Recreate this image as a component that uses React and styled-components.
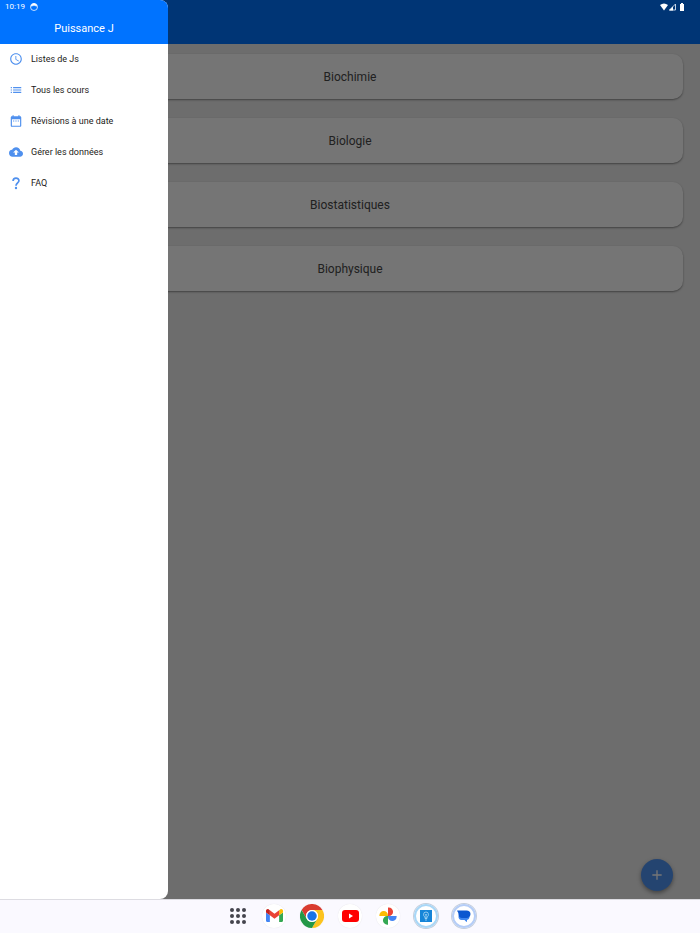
import React from "react";
import styled, { createGlobalStyle } from "styled-components";
import {
  MdAccessTime,
  MdList,
  MdDateRange,
  MdBackup,
  MdAdd,
} from "react-icons/md";

const GlobalStyle = createGlobalStyle`
  * { box-sizing: border-box; }
  body { margin: 0; font-family: Roboto, sans-serif; background: #faf9ff; }
  button { font: inherit; border: 0; padding: 0; background: none; cursor: pointer; }
`;

const Device = styled.div`
  min-height: 100vh;
  display: flex;
  flex-direction: column;
`;

const Screen = styled.div`
  position: relative;
  flex: 1;
  display: flex;
  flex-direction: column;
  background: #ededed;
`;

const AppBar = styled.header`
  height: 44px;
  background: #0073ff;
`;

const Courses = styled.main`
  display: flex;
  flex-direction: column;
  gap: 19px;
  padding: 10px 17px;
`;

const Course = styled.button`
  height: 45px;
  border-radius: 10px;
  background: #ffffff;
  box-shadow: 0 1px 2px rgba(0, 0, 0, 0.4);
  color: #484848;
  font-size: 12px;
  line-height: 16px;
`;

const AddButton = styled.button`
  position: absolute;
  right: 27px;
  bottom: 8px;
  width: 32px;
  height: 32px;
  display: grid;
  place-items: center;
  border-radius: 50%;
  background: #5094f5;
  color: #ffffff;
  box-shadow: 0 2px 4px rgba(0, 0, 0, 0.4);
`;

const Scrim = styled.div`
  position: absolute;
  inset: 0;
  background: rgba(0, 0, 0, 0.54);
`;

const Drawer = styled.aside`
  position: absolute;
  top: 0;
  bottom: 0;
  left: 0;
  width: 24%;
  min-width: 168px;
  overflow: hidden;
  border-radius: 0 8px 8px 0;
  background: #ffffff;
`;

const DrawerHeader = styled.header`
  height: 44px;
  padding-top: 20px;
  background: #0073ff;
  color: #ffffff;
  text-align: center;
`;

const DrawerTitle = styled.h1`
  margin: 0;
  font-size: 11px;
  font-weight: 400;
  line-height: 17px;
`;

const MenuItem = styled.button`
  width: 100%;
  height: 31px;
  display: flex;
  align-items: center;
  gap: 8px;
  padding: 0 9px 1px;
  color: #1d1b20;
  font-size: 9px;
  line-height: 14px;
  text-align: left;

  svg {
    flex: none;
    color: #4f90ee;
  }
`;

const StatusBar = styled.div`
  position: absolute;
  inset: 0 0 auto;
  height: 14px;
  display: flex;
  align-items: center;
  gap: 5px;
  padding: 0 14px 0 5px;
  color: #ffffff;
  font-size: 8px;
  line-height: 14px;
`;

const Signals = styled.div`
  display: flex;
  align-items: center;
  margin-left: auto;
`;

const Taskbar = styled.nav`
  height: 34px;
  display: flex;
  align-items: center;
  justify-content: center;
  gap: 14px;
  padding: 0 4px 2px 8px;
  border-top: 1px solid #dddce2;
  background: #faf9ff;
`;

const AllApps = styled.button`
  width: 20px;
  height: 24px;
  display: grid;
  place-items: center;
`;

const ringColors = { sky: "#a9d7f7", blue: "#b5cdf7" };

const AppIcon = styled.button`
  width: 24px;
  height: 24px;
  display: grid;
  place-items: center;
  border-radius: 50%;
  background: #ffffff;
  box-shadow: ${({ $ring }) =>
    $ring
      ? `inset 0 0 0 2px ${ringColors[$ring]}, 0 0 0 1px #c3cddb`
      : "0 0 1px rgba(0, 0, 0, 0.12)"};

  svg { display: block; }
`;

const courses = ["Biochimie", "Biologie", "Biostatistiques", "Biophysique"];

function HelpIcon({ size }) {
  return (
    <svg width={size} height={size} viewBox="0 0 24 24" fill="none" stroke="currentColor">
      <path d="M7 8.500C7 2 17 2 17 8c0 3.500-5 4-5 8.500" strokeWidth="3" />
      <circle cx="12" cy="20.500" r="2" fill="currentColor" stroke="none" />
    </svg>
  );
}

const menu = [
  { label: "Listes de Js", Icon: MdAccessTime },
  { label: "Tous les cours", Icon: MdList },
  { label: "Révisions à une date", Icon: MdDateRange },
  { label: "Gérer les données", Icon: MdBackup },
  { label: "FAQ", Icon: HelpIcon },
];

function GridIcon() {
  const stops = [3, 9, 15];
  return (
    <svg width="18" height="18" viewBox="0 0 18 18" fill="#44454d">
      {stops.map((y) => stops.map((x) => <circle key={`${x}-${y}`} cx={x} cy={y} r="2" />))}
    </svg>
  );
}

function GmailIcon() {
  return (
    <svg width="17" height="13" viewBox="0 0 88 66">
      <path fill="#4285f4" d="M6 66h14V32L0 17v43c0 3.300 2.700 6 6 6" />
      <path fill="#34a853" d="M68 66h14c3.300 0 6-2.700 6-6V17L68 32" />
      <path fill="#fbbc04" d="M68 6v26l20-15V9c0-7.400-8.500-11.700-14.400-7.200" />
      <path fill="#ea4335" d="M20 32V6l24 18L68 6v26L44 50" />
      <path fill="#c5221f" d="M0 9v8l20 15V6l-5.600-4.200C8.500-2.700 0 1.600 0 9" />
    </svg>
  );
}

function ChromeIcon() {
  return (
    <svg width="24" height="24" viewBox="0 0 48 48">
      <circle cx="24" cy="24" r="24" fill="#fff" />
      <path fill="#d93c30" d="M3.200 12A24 24 0 0 1 44.800 12H24A12 12 0 0 0 13.600 30Z" />
      <path fill="#fcc31e" d="M44.800 12A24 24 0 0 1 24 48L34.400 30A12 12 0 0 0 24 12Z" />
      <path fill="#249847" d="M24 48A24 24 0 0 1 3.200 12L13.600 30A12 12 0 0 0 34.400 30Z" />
      <circle cx="24" cy="24" r="12" fill="#fff" />
      <circle cx="24" cy="24" r="9.500" fill="#1a73e8" />
    </svg>
  );
}

function YouTubeIcon() {
  return (
    <svg width="17" height="12" viewBox="0 0 17 12">
      <rect width="17" height="12" rx="3" fill="#ff0000" />
      <path d="M7 3.500v5L11 6Z" fill="#fff" />
    </svg>
  );
}

function PhotosIcon() {
  return (
    <svg width="18" height="18" viewBox="0 0 24 24">
      <path fill="#ea4335" d="M12 0.500h1a5.500 5.500 0 0 1 0 11.500h-1Z" />
      <path fill="#4285f4" d="M23.500 12v1a5.500 5.500 0 0 1-11.500 0v-1Z" />
      <path fill="#34a853" d="M12 23.500h-1a5.500 5.500 0 0 1 0-11.500h1Z" />
      <path fill="#fbbc04" d="M0.500 12v-1a5.500 5.500 0 0 1 11.500 0v1Z" />
    </svg>
  );
}

function BulbIcon() {
  return (
    <svg width="12" height="12" viewBox="0 0 24 24">
      <rect width="24" height="24" fill="#1685d8" />
      <path
        d="M10 17v-3c-2-1-3-3-3-5a5 5 0 0 1 10 0c0 2-1 4-3 5v3ZM10 20h4M10 8l2 3 2-3M12 11v6"
        fill="none"
        stroke="#b4ddf7"
        strokeWidth="1.500"
      />
    </svg>
  );
}

function MessagesIcon() {
  return (
    <svg width="14" height="12" viewBox="0 0 28 24">
      <path
        fill="#3f86ee"
        d="M8 8h11c4 0 6 3 6 6s-2 5-5 6v3c0 1-1 1-2 0l-3-3H9c-4 0-6-3-6-6s2-6 5-6Z"
      />
      <path
        fill="#0b57d0"
        d="M1 1h18c5 0 8 3 8 7s-3 8-8 8H10c-4 0-7-3-7-7 0-3-1-5-2-6-1-1-1-2 0-2Z"
      />
    </svg>
  );
}

function NotificationIcon() {
  return (
    <svg width="8" height="8" viewBox="0 0 16 16" fill="none" stroke="#fff">
      <circle cx="8" cy="8" r="7" strokeWidth="1.500" />
      <path d="M2 6c2 1 3-1 6-1s4 2 6 1c-1-4-4-5-6-5S3 2 2 6Z" fill="#fff" />
    </svg>
  );
}

function StatusIcons() {
  return (
    <svg width="26" height="8" viewBox="0 0 26 8" fill="#fff">
      <path d="M0 2Q4-1 8 2L4 7.500Z" />
      <path d="M9.500 7L15.500 1V7Z" fill="none" stroke="#c5d3e5" />
      <path d="M9 7.500l4-4v4Z" />
      <path d="M20 1h1V0h2v1h1v7h-4Z" />
    </svg>
  );
}

const apps = [
  { label: "Gmail", Icon: GmailIcon },
  { label: "Chrome", Icon: ChromeIcon },
  { label: "YouTube", Icon: YouTubeIcon },
  { label: "Photos", Icon: PhotosIcon },
  { label: "Puissance J", Icon: BulbIcon, ring: "sky" },
  { label: "Messages", Icon: MessagesIcon, ring: "blue" },
];

export default function App() {
  return (
    <Device>
      <GlobalStyle />
      <Screen>
        <AppBar />
        <Courses>
          {courses.map((name) => (
            <Course key={name}>{name}</Course>
          ))}
        </Courses>
        <AddButton aria-label="Ajouter">
          <MdAdd size={16} />
        </AddButton>
        <Scrim />
        <Drawer>
          <DrawerHeader>
            <DrawerTitle>Puissance J</DrawerTitle>
          </DrawerHeader>
          <nav>
            {menu.map(({ label, Icon }) => (
              <MenuItem key={label}>
                <Icon size={14} />
                {label}
              </MenuItem>
            ))}
          </nav>
        </Drawer>
        <StatusBar>
          <span>10:19</span>
          <NotificationIcon />
          <Signals>
            <StatusIcons />
          </Signals>
        </StatusBar>
      </Screen>
      <Taskbar>
        <AllApps aria-label="Applications">
          <GridIcon />
        </AllApps>
        {apps.map(({ label, Icon, ring }) => (
          <AppIcon key={label} aria-label={label} $ring={ring}>
            <Icon />
          </AppIcon>
        ))}
      </Taskbar>
    </Device>
  );
}
